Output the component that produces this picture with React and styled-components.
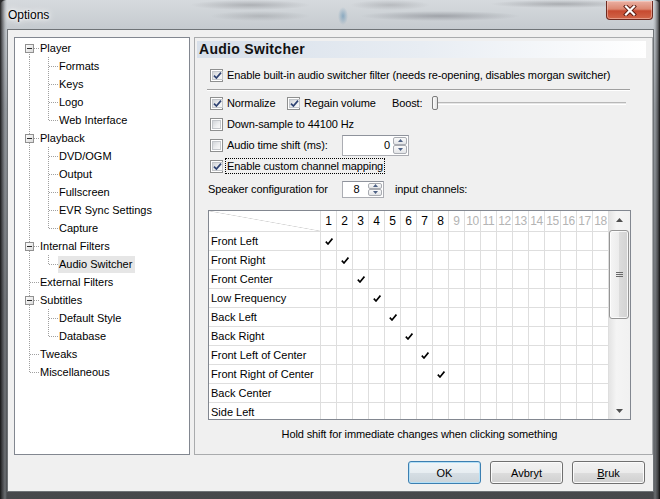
import React from 'react';
import styled, { createGlobalStyle } from 'styled-components';

const GlobalStyle = createGlobalStyle`
  html, body { margin: 0; padding: 0; background: #2a2b2d; }
  body { font-family: "Liberation Sans", Arial, sans-serif; font-size: 11px; color: #000; }
  * { box-sizing: border-box; }
`;

const FONT = `"Liberation Sans", Arial, sans-serif`;

const Window = styled.div`
  width: 660px;
  height: 499px;
  display: flex;
  flex-direction: column;
  border-radius: 6px 6px 0 0;
  overflow: hidden;
  background:
    linear-gradient(to right, rgba(15,15,15,0.9) 0, rgba(55,55,58,0.7) 2px, rgba(150,155,160,0.45) 5px, transparent 7px),
    linear-gradient(to left, rgba(10,10,10,0.95) 0, rgba(60,60,62,0.7) 2px, rgba(150,155,160,0.45) 5px, transparent 7px),
    linear-gradient(to bottom, #d6dade 0, #c6cbd0 28px, #8f9499 110px, #5c5f63 300px, #46484b 100%);
`;

const TitleBar = styled.div`
  height: 29px;
  flex: none;
  display: flex;
  align-items: flex-start;
  padding-left: 8px;
  background:
    radial-gradient(ellipse 60px 5px at 250px 5px, rgba(60,60,65,0.25), transparent),
    radial-gradient(ellipse 50px 5px at 260px 16px, rgba(70,70,75,0.2), transparent),
    radial-gradient(ellipse 70px 4px at 560px 4px, rgba(60,60,65,0.28), transparent),
    radial-gradient(ellipse 80px 5px at 440px 16px, rgba(55,55,65,0.3), transparent),
    radial-gradient(ellipse 5px 9px at 343px 16px, rgba(40,110,160,0.4), transparent),
    radial-gradient(ellipse 40px 5px at 390px 5px, rgba(70,70,75,0.2), transparent);
`;

const Title = styled.span`
  font-family: ${FONT};
  font-size: 12px;
  line-height: 31px;
  color: #000;
  text-shadow: 0 0 6px #fff, 0 0 3px #fff, 0 0 10px #fff;
`;

const CloseButton = styled.div`
  margin-left: auto;
  margin-right: 7px;
  margin-top: 1px;
  width: 47px;
  height: 19px;
  border: 1px solid #6e2a20;
  border-top: none;
  border-radius: 0 0 4px 4px;
  background: linear-gradient(#eab0a3 0%, #dc8771 45%, #c74a30 55%, #d2664a 100%);
  box-shadow: inset 0 0 0 1px rgba(255,220,210,0.45);
  display: flex;
  align-items: center;
  justify-content: center;
`;

const Client = styled.div`
  flex: 1;
  margin: 0 6px 7px 7px;
  border: 1px solid #6f7377;
  background: #f0f0f0;
  display: flex;
  flex-direction: column;
  padding: 7px 0 7px 6px;
  letter-spacing: -0.12px;
`;

const MainRow = styled.div`
  display: flex;
  gap: 4px;
  height: 418px;
`;

const TreePanel = styled.div`
  width: 176px;
  border: 1px solid #828790;
  background: #fff;
  padding: 1px 0 0 5px;
  display: flex;
  flex-direction: column;
  letter-spacing: 0;
`;

const TreeRow = styled.div`
  height: 18px;
  display: flex;
  align-items: center;
`;

const Cell = styled.svg`
  flex: none;
  display: block;
`;

const TreeLabel = styled.span`
  height: 17px;
  line-height: 17px;
  padding: 0 3px 0 1px;
  white-space: nowrap;
  background: ${p => (p.$selected ? '#e6e6e6' : 'transparent')};
`;

const Page = styled.div`
  width: 459px;
  border: 1px solid #a9abad;
  display: flex;
  flex-direction: column;
  padding: 3px 6px 0 2px;
`;

const Header = styled.div`
  height: 17px;
  line-height: 17px;
  padding-left: 2px;
  font-family: ${FONT};
  font-weight: bold;
  font-size: 14px;
  letter-spacing: 0.3px;
  color: #111;
  background: linear-gradient(to right, #d8e0ea 0%, #e8edf3 50%, #ffffff 100%);
`;

const Content = styled.div`
  display: flex;
  flex-direction: column;
  padding-left: 11px;
`;

const Row = styled.div`
  height: ${p => p.$h || 20}px;
  margin-top: ${p => p.$mt || 0}px;
  display: flex;
  align-items: center;
  padding-left: ${p => (p.$pl === undefined ? 2 : p.$pl)}px;
`;

const Separator = styled.div`
  margin: 4px 0 0 -1px;
  width: 423px;
  height: 2px;
  border-top: 1px solid #a0a0a0;
  border-bottom: 1px solid #ffffff;
`;

const CheckItem = styled.label`
  display: flex;
  align-items: center;
  width: ${p => (p.$w ? `${p.$w}px` : 'auto')};
  flex: none;
  white-space: nowrap;
`;

const Box = styled.span`
  width: 13px;
  height: 13px;
  flex: none;
  border: 1px solid #8e8f8f;
  background: #fff;
  padding: 1px;
  display: flex;
`;

const BoxInner = styled.span`
  flex: 1;
  border: 1px solid #c3c6ca;
  background: linear-gradient(135deg, #d2d5d9 0%, #eeeff0 60%, #f8f8f8 100%);
  display: flex;
  align-items: center;
  justify-content: center;
`;

const CheckText = styled.span`
  margin-left: 2px;
  padding: 0 1px;
  height: 16px;
  line-height: 14px;
  border: 1px ${p => (p.$focus ? 'dotted #000' : 'solid transparent')};
`;

const PlainText = styled.span`
  width: ${p => (p.$w ? `${p.$w}px` : 'auto')};
  flex: none;
  white-space: nowrap;
  margin-left: ${p => p.$ml || 0}px;
`;

const Slider = styled.div`
  position: relative;
  width: 194px;
  height: 16px;
`;

const Track = styled.div`
  position: absolute;
  left: 2px;
  right: 0;
  top: 7px;
  height: 3px;
  border-top: 1px solid #b8b8b8;
  border-bottom: 1px solid #fff;
  background: #e6e6e6;
`;

const Thumb = styled.div`
  position: absolute;
  left: 0;
  top: 1px;
  width: 6px;
  height: 14px;
  border: 1px solid #7d7d7d;
  border-radius: 2px;
  background: linear-gradient(to right, #fdfdfd, #e2e2e2);
`;

const Spin = styled.div`
  width: ${p => p.$w}px;
  height: ${p => p.$h}px;
  flex: none;
  border: 1px solid #abadb3;
  border-top-color: #8f939c;
  background: #fff;
  display: flex;
`;

const SpinValue = styled.span`
  flex: 1;
  display: flex;
  align-items: center;
  justify-content: ${p => (p.$center ? 'center' : 'flex-end')};
  padding: ${p => (p.$center ? '0 0 0 2px' : '0 3px 0 0')};
`;

const SpinButtons = styled.div`
  width: 15px;
  display: flex;
  flex-direction: column;
  padding: 1px 1px 1px 0;
`;

const SpinBtn = styled.span`
  flex: 1;
  border: 1px solid #a9acb2;
  border-radius: 2px;
  background: linear-gradient(#fafafa, #e3e5e8);
  display: flex;
  align-items: center;
  justify-content: center;
`;

const Grid = styled.div`
  margin-top: ${p => p.$mt}px;
  width: 423px;
  height: 210px;
  border: 1px solid #828790;
  background: #fff;
  display: flex;
`;

const Table = styled.div`
  width: 400px;
  height: 208px;
  overflow: hidden;
  display: grid;
  grid-template-columns: 112px repeat(18, 16px);
  grid-template-rows: 21px;
  grid-auto-rows: 19px;
  align-content: start;
`;

const TCell = styled.div`
  border-right: 1px solid #dedede;
  border-bottom: 1px solid #dedede;
  display: flex;
  align-items: center;
  justify-content: ${p => (p.$label ? 'flex-start' : 'center')};
  padding-left: ${p => (p.$label ? 2 : 0)}px;
  white-space: nowrap;
  color: ${p => (p.$dim ? '#b4b4b4' : '#000')};
  font-size: ${p => (p.$head ? 12 : 11)}px;
  letter-spacing: ${p => (p.$head ? '-0.3px' : '0')};
  background: ${p =>
    p.$diag
      ? 'linear-gradient(to top right, transparent calc(50% - 0.6px), #d4d4d4 50%, transparent calc(50% + 0.6px))'
      : 'transparent'};
`;

const Scrollbar = styled.div`
  width: 21px;
  display: flex;
  flex-direction: column;
  background: linear-gradient(to right, #e4e4e4, #f4f4f4 35%, #f1f1f1);
`;

const ScrollArrow = styled.div`
  height: ${p => p.$h}px;
  display: flex;
  align-items: center;
  justify-content: center;
`;

const ScrollThumb = styled.div`
  margin: 1px 1px 0 0;
  height: 89px;
  border: 1px solid #959595;
  border-radius: 3px;
  background: linear-gradient(to right, #f5f5f5 0%, #ececec 50%, #dcdcdc 51%, #d2d2d2 100%);
  box-shadow: inset 0 0 0 1px rgba(255,255,255,0.8);
  display: flex;
  align-items: center;
  justify-content: center;
`;

const Spacer = styled.div`
  flex: 1;
`;

const Footer = styled.div`
  margin-top: 7px;
  width: 423px;
  text-align: center;
  height: 14px;
  line-height: 14px;
`;

const ButtonRow = styled.div`
  margin-top: 6px;
  display: flex;
  justify-content: flex-end;
  gap: 9px;
  padding-right: 8px;
`;

const Button = styled.button`
  width: 73px;
  height: 23px;
  padding: 0;
  font-family: ${FONT};
  font-size: 11px;
  color: #000;
  border: 1px solid ${p => (p.$primary ? '#3c7fb1' : '#707070')};
  border-radius: 3px;
  background: ${p =>
    p.$primary
      ? 'linear-gradient(#f0f5f8 0%, #e7edf1 50%, #d6dee4 51%, #cbd4da 100%)'
      : 'linear-gradient(#f2f2f2 0%, #ebebeb 50%, #dddddd 51%, #cfcfcf 100%)'};
  box-shadow: inset 0 0 0 1px ${p => (p.$primary ? '#b4e0f7' : '#fbfbfb')};
  u { text-decoration: underline; }
`;

const tree = [
  { label: 'Player', children: ['Formats', 'Keys', 'Logo', 'Web Interface'] },
  { label: 'Playback', children: ['DVD/OGM', 'Output', 'Fullscreen', 'EVR Sync Settings', 'Capture'] },
  { label: 'Internal Filters', children: ['Audio Switcher'] },
  { label: 'External Filters' },
  { label: 'Subtitles', children: ['Default Style', 'Database'] },
  { label: 'Tweaks' },
  { label: 'Miscellaneous' },
];

const flatRows = [];
tree.forEach((node, i) => {
  const lastRoot = i === tree.length - 1;
  flatRows.push({ label: node.label, depth: 0, first: i === 0, last: lastRoot, hasChildren: !!node.children });
  (node.children || []).forEach((c, j) => {
    flatRows.push({
      label: c,
      depth: 1,
      last: j === node.children.length - 1,
      rootLast: lastRoot,
      selected: c === 'Audio Switcher',
    });
  });
});

const DOT = { stroke: '#a0a0a0', strokeWidth: 1, strokeDasharray: '1 1' };

function PassCell({ show }) {
  return (
    <Cell width="19" height="18" viewBox="0 0 19 18">
      {show && <line x1="9.5" y1="0" x2="9.5" y2="18" {...DOT} />}
    </Cell>
  );
}

function OwnCell({ first, last, expander }) {
  return (
    <Cell width="19" height="18" viewBox="0 0 19 18">
      <line x1="9.5" y1={first ? 9 : 0} x2="9.5" y2={last ? 9 : 18} {...DOT} />
      <line x1="10" y1="9.5" x2="19" y2="9.5" {...DOT} />
      {expander && (
        <>
          <defs>
            <linearGradient id="exp" x1="0" y1="0" x2="1" y2="1">
              <stop offset="0" stopColor="#ffffff" />
              <stop offset="1" stopColor="#d8d8d8" />
            </linearGradient>
          </defs>
          <rect x="5.5" y="5.5" width="8" height="8" fill="url(#exp)" stroke="#919191" />
          <line x1="7" y1="9.5" x2="12" y2="9.5" stroke="#2b2b2b" />
        </>
      )}
    </Cell>
  );
}

function Check() {
  return (
    <svg width="9" height="9" viewBox="0 0 9 9">
      <path d="M1 4.6 L3.4 7 L8 1.6" fill="none" stroke="#2f4372" strokeWidth="1.7" />
    </svg>
  );
}

function CheckBox({ checked, children, w, focus }) {
  return (
    <CheckItem $w={w}>
      <Box>
        <BoxInner>{checked && <Check />}</BoxInner>
      </Box>
      <CheckText $focus={focus}>{children}</CheckText>
    </CheckItem>
  );
}

function Tri({ up }) {
  return (
    <svg width="5" height="3" viewBox="0 0 5 3">
      <path d={up ? 'M0 3 L2.5 0 L5 3 Z' : 'M0 0 L5 0 L2.5 3 Z'} fill="#4d6185" />
    </svg>
  );
}

function SpinBox({ value, w, h, center }) {
  return (
    <Spin $w={w} $h={h}>
      <SpinValue $center={center}>{value}</SpinValue>
      <SpinButtons>
        <SpinBtn><Tri up /></SpinBtn>
        <SpinBtn><Tri /></SpinBtn>
      </SpinButtons>
    </Spin>
  );
}

function GridCheck() {
  return (
    <svg width="8" height="7" viewBox="0 0 8 7">
      <path d="M0.8 3.6 L3 6 L7.4 0.6" fill="none" stroke="#000" strokeWidth="1.6" />
    </svg>
  );
}

const channels = [
  'Front Left',
  'Front Right',
  'Front Center',
  'Low Frequency',
  'Back Left',
  'Back Right',
  'Front Left of Center',
  'Front Right of Center',
  'Back Center',
  'Side Left',
];

const cols = Array.from({ length: 18 }, (_, i) => i + 1);

export default function App() {
  return (
    <>
      <GlobalStyle />
      <Window>
        <TitleBar>
          <Title>Options</Title>
          <CloseButton>
            <svg width="14" height="11" viewBox="0 0 14 11">
              <path d="M3 1.5 L11 9.5 M11 1.5 L3 9.5" stroke="#5a1a10" strokeWidth="4" strokeLinecap="square" />
              <path d="M3 1.5 L11 9.5 M11 1.5 L3 9.5" stroke="#ffffff" strokeWidth="2.2" strokeLinecap="square" />
            </svg>
          </CloseButton>
        </TitleBar>
        <Client>
          <MainRow>
            <TreePanel>
              {flatRows.map((r, i) => (
                <TreeRow key={i}>
                  {r.depth === 1 && <PassCell show={!r.rootLast} />}
                  <OwnCell first={r.first} last={r.last} expander={r.hasChildren} />
                  <TreeLabel $selected={r.selected}>{r.label}</TreeLabel>
                </TreeRow>
              ))}
            </TreePanel>
            <Page>
              <Header>Audio Switcher</Header>
              <Content>
                <Row $mt={7}>
                  <CheckBox checked>
                    Enable built-in audio switcher filter (needs re-opening, disables morgan switcher)
                  </CheckBox>
                </Row>
                <Separator />
                <Row $mt={2}>
                  <CheckBox checked w={77}>Normalize</CheckBox>
                  <CheckBox checked w={105}>Regain volume</CheckBox>
                  <PlainText $w={40}>Boost:</PlainText>
                  <Slider>
                    <Track />
                    <Thumb />
                  </Slider>
                </Row>
                <Row $mt={1}>
                  <CheckBox>Down-sample to 44100 Hz</CheckBox>
                </Row>
                <Row $mt={1}>
                  <CheckBox w={132}>Audio time shift (ms):</CheckBox>
                  <SpinBox value="0" w={67} h={21} />
                </Row>
                <Row $mt={1}>
                  <CheckBox checked focus>Enable custom channel mapping</CheckBox>
                </Row>
                <Row $mt={3} $pl={0}>
                  <PlainText $w={134}>Speaker configuration for</PlainText>
                  <SpinBox value="8" w={42} h={17} center />
                  <PlainText $ml={11}>input channels:</PlainText>
                </Row>
                <Grid $mt={11}>
                  <Table>
                    <TCell $diag />
                    {cols.map(c => (
                      <TCell key={c} $head $dim={c > 8}>{c}</TCell>
                    ))}
                    {channels.map((name, ri) => (
                      <React.Fragment key={name}>
                        <TCell $label>{name}</TCell>
                        {cols.map(c => (
                          <TCell key={c}>{c === ri + 1 && ri < 8 ? <GridCheck /> : null}</TCell>
                        ))}
                      </React.Fragment>
                    ))}
                  </Table>
                  <Scrollbar>
                    <ScrollArrow $h={18}>
                      <svg width="7" height="4" viewBox="0 0 7 4"><path d="M0 4 L3.5 0 L7 4 Z" fill="#505050" /></svg>
                    </ScrollArrow>
                    <ScrollThumb>
                      <svg width="7" height="5" viewBox="0 0 7 5">
                        <path d="M0 0.5 H7 M0 2.5 H7 M0 4.5 H7" stroke="#6a6a6a" strokeWidth="1" />
                      </svg>
                    </ScrollThumb>
                    <Spacer />
                    <ScrollArrow $h={17}>
                      <svg width="7" height="4" viewBox="0 0 7 4"><path d="M0 0 L7 0 L3.5 4 Z" fill="#505050" /></svg>
                    </ScrollArrow>
                  </Scrollbar>
                </Grid>
                <Footer>Hold shift for immediate changes when clicking something</Footer>
              </Content>
            </Page>
          </MainRow>
          <ButtonRow>
            <Button $primary>OK</Button>
            <Button>Avbryt</Button>
            <Button><u>B</u>ruk</Button>
          </ButtonRow>
        </Client>
      </Window>
    </>
  );
}
